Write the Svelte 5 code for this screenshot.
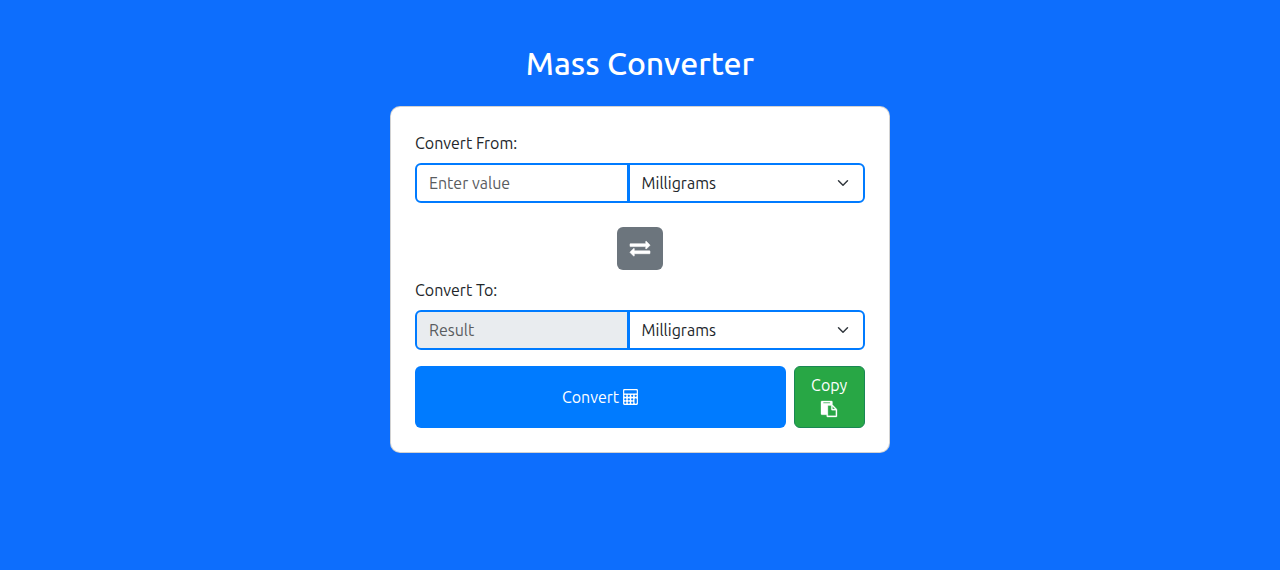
<script>
  const units = { Milligrams: 0.001, Grams: 1, Kilograms: 1000, Ounces: 28.349523125, Pounds: 453.59237 };
  const names = Object.keys(units);
  let amount = $state('');
  let from = $state('Milligrams');
  let to = $state('Milligrams');
  let result = $state('');

  function swap() {
    [from, to] = [to, from];
  }
  function convert() {
    if (amount !== '') result = String((Number(amount) * units[from]) / units[to]);
  }
  function copy() {
    navigator.clipboard?.writeText(result);
  }
</script>

<main>
  <h1>Mass Converter</h1>
  <section class="card">
    <label for="amount">Convert From:</label>
    <div class="group">
      <input id="amount" placeholder="Enter value" bind:value={amount} />
      <select aria-label="From unit" bind:value={from}>
        {#each names as n}<option>{n}</option>{/each}
      </select>
    </div>
    <button class="swap" aria-label="Swap units" onclick={swap}>
      <svg width="20" height="20" viewBox="0 0 1792 1792"><path stroke="currentColor" stroke-width="50" d="M1792 1184v192q0 13-9.5 22.5t-22.5 9.5h-1376v192q0 13-9.5 22.5t-22.5 9.5q-12 0-24-10l-319-320q-9-9-9-22 0-14 9-23l320-320q9-9 23-9 13 0 22.5 9.5t9.5 22.5v192h1376q13 0 22.5 9.5t9.5 22.5zm0-544q0 14-9 23l-320 320q-9 9-23 9-13 0-22.5-9.5t-9.5-22.5v-192h-1376q-13 0-22.5-9.5t-9.5-22.5v-192q0-13 9.5-22.5t22.5-9.5h1376v-192q0-14 9-23t23-9q12 0 24 10l319 319q9 9 9 23z" /></svg>
    </button>
    <label for="result">Convert To:</label>
    <div class="group">
      <input id="result" class="result" placeholder="Result" readonly value={result} />
      <select aria-label="To unit" bind:value={to}>
        {#each names as n}<option>{n}</option>{/each}
      </select>
    </div>
    <div class="actions">
      <button class="convert" onclick={convert}>
        <span>Convert</span>
        <svg width="15" height="16" viewBox="0 0 1664 1792"><path fill-rule="evenodd" d="M128 0H1536a128 128 0 0 1 128 128V1664a128 128 0 0 1-128 128H128a128 128 0 0 1-128-128V128a128 128 0 0 1 128-128zM192 128a64 64 0 0 0-64 64V448a64 64 0 0 0 64 64H1472a64 64 0 0 0 64-64V192a64 64 0 0 0-64-64zM128 768a128 128 0 1 0 256 0a128 128 0 1 0-256 0zM512 768a128 128 0 1 0 256 0a128 128 0 1 0-256 0zM896 768a128 128 0 1 0 256 0a128 128 0 1 0-256 0zM1280 768a128 128 0 1 0 256 0a128 128 0 1 0-256 0zM128 1152a128 128 0 1 0 256 0a128 128 0 1 0-256 0zM512 1152a128 128 0 1 0 256 0a128 128 0 1 0-256 0zM896 1152a128 128 0 1 0 256 0a128 128 0 1 0-256 0zM128 1536a128 128 0 1 0 256 0a128 128 0 1 0-256 0zM512 1536a128 128 0 1 0 256 0a128 128 0 1 0-256 0zM896 1536a128 128 0 1 0 256 0a128 128 0 1 0-256 0zM1280 1152a128 128 0 0 1 256 0V1536a128 128 0 0 1-256 0z" /></svg>
      </button>
      <button class="copy" onclick={copy}>
        <span>Copy</span>
        <svg width="16" height="16" viewBox="0 0 1792 1792"><path stroke="currentColor" stroke-width="36" d="M768 1664h896v-640h-416q-40 0-68-28t-28-68v-416h-384v1152zm256-1440v-64q0-13-9.5-22.5t-22.5-9.5h-704q-13 0-22.5 9.5t-9.5 22.5v64q0 13 9.5 22.5t22.5 9.5h704q13 0 22.5-9.5t9.5-22.5zm256 672h299l-299-299v299zm512 128v672q0 40-28 68t-68 28h-960q-40 0-68-28t-28-68v-160h-544q-40 0-68-28t-28-68v-1344q0-40 28-68t68-28h1088q40 0 68 28t28 68v328q21 13 36 28l408 408q28 28 48 76t20 88z" /></svg>
      </button>
    </div>
  </section>
</main>

<style>
  :global(body) {
    background: #0d6efd;
  }
  main,
  input,
  select,
  button {
    font: 400 16px/24px Ubuntu, 'Open Sans', 'Noto Sans', sans-serif;
  }
  main {
    box-sizing: border-box;
    min-height: 570px;
    padding-top: 44px;
    color: #212529;
  }
  main * {
    box-sizing: border-box;
  }
  h1 {
    margin: 0 0 24px;
    color: #fff;
    font-size: 32px;
    font-weight: 500;
    line-height: 38px;
    text-align: center;
  }
  .card {
    display: flex;
    flex-direction: column;
    width: 500px;
    height: 347px;
    margin: 0 auto;
    padding: 24px;
    border: 1px solid rgb(0 0 0 / 17.5%);
    border-radius: 10px;
    background: #fff;
  }
  label {
    height: 24px;
    margin-bottom: 8px;
  }
  .group {
    display: grid;
    grid-template-columns: 214px 237px;
    height: 40px;
  }
  input,
  select {
    width: 100%;
    min-width: 0;
    height: 40px;
    margin: 0;
    padding: 6px 12px;
    border: 2px solid #007bff;
    color: #212529;
    background-color: #fff;
    outline: none;
  }
  input {
    border-radius: 6px 0 0 6px;
  }
  select {
    width: 237.4px;
    margin-left: -1.4px;
    appearance: none;
    border-radius: 0 6px 6px 0;
    background: #fff url("data:image/svg+xml,%3csvg xmlns='http://www.w3.org/2000/svg' viewBox='0 0 16 16'%3e%3cpath fill='none' stroke='%23343a40' stroke-linecap='round' stroke-linejoin='round' stroke-width='2' d='m2 5 6 6 6-6'/%3e%3c/svg%3e") no-repeat right 14px center / 12px;
  }
  input::placeholder {
    color: #595c5f;
    opacity: 1;
  }
  .result {
    background-color: #e9ecef;
  }
  button {
    padding: 0;
    border: 0;
    border-radius: 6px;
    color: #fff;
  }
  svg {
    display: block;
    flex: none;
    overflow: visible;
    fill: currentColor;
  }
  .swap {
    display: flex;
    align-self: center;
    align-items: center;
    justify-content: center;
    width: 46px;
    height: 43px;
    margin: 24px 0 8px;
    padding-bottom: 1px;
    background: #6c757d;
  }
  .actions {
    display: flex;
    gap: 8px;
    height: 62px;
    margin-top: 16px;
  }
  .convert {
    display: flex;
    align-items: center;
    justify-content: center;
    gap: 3.6px;
    width: 371px;
    padding-right: 1.4px;
    background: #007bff;
  }
  .copy {
    display: flex;
    flex-direction: column;
    align-items: center;
    width: 71px;
    padding-top: 6px;
    border: 1px solid #198754;
    background: #28a745;
  }
  .copy span {
    margin-right: 0.6px;
  }
  .copy svg {
    margin: 4px 1px 0 0;
  }
</style>
